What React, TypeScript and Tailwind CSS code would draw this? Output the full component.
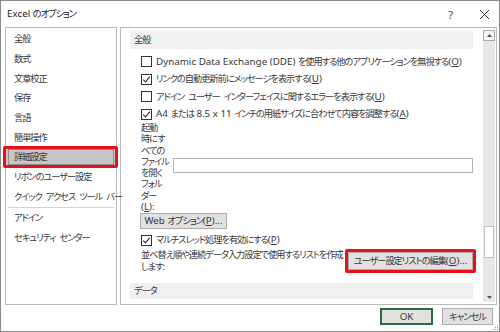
import React from "react";

const Check = ({ checked }: { checked?: boolean }) => (
  <span className="w-[11px] h-[11px] border border-[#333] bg-white flex items-center justify-center shrink-0">
    {checked && (
      <svg width="9" height="9" viewBox="0 0 9 9">
        <path d="M1.2 4.6 L3.5 6.9 L7.8 1.6" fill="none" stroke="#333" strokeWidth="1.1" />
      </svg>
    )}
  </span>
);

const L = ({ children }: { children: React.ReactNode }) => (
  <span className="tracking-normal text-[9.8px]">{children}</span>
);

const S = () => <span className="inline-block w-[4px]" />;

const U = ({ c }: { c: string }) => (
  <span className="tracking-normal text-[9.8px]">
    (<span className="underline underline-offset-[1px]">{c}</span>)
  </span>
);

const Row = ({ checked, children }: { checked?: boolean; children: React.ReactNode }) => (
  <div className="h-[17.5px] flex items-center pl-[11px] gap-[4px] whitespace-nowrap">
    <Check checked={checked} />
    <span>{children}</span>
  </div>
);

const menu: React.ReactNode[] = [
  "全般",
  "数式",
  "文章校正",
  "保存",
  "言語",
  "簡単操作",
  "詳細設定",
  "リボンのユーザー設定",
  <>
    クイック<S />アクセス<S />ツール<S />バー
  </>,
];

export default function App() {
  return (
    <div className="w-[500px] h-[332px] bg-white border border-[#8a8a8a] flex flex-col relative text-[9.2px] tracking-[-1px] text-[#383838] [font-family:'Noto_Sans','Noto_Sans_CJK_JP',sans-serif] [font-feature-settings:'palt'] leading-none">
      {/* title bar */}
      <div className="h-[26px] flex items-center pl-[6px] shrink-0">
        <span className="text-[#222]">
          <L>Excel </L>のオプション
        </span>
        <div className="ml-auto flex items-center">
          <span className="text-[11px] tracking-normal text-[#444] mr-[26px]">?</span>
          <svg width="11" height="11" viewBox="0 0 11 11" className="mr-[9px]">
            <path d="M1 1 L10 10 M10 1 L1 10" stroke="#333" strokeWidth="1" />
          </svg>
        </div>
      </div>

      {/* main */}
      <div className="h-[278px] flex pl-[4px] pr-[2px] gap-[3px] shrink-0">
        {/* left panel */}
        <div className="w-[112px] border border-[#b9b9b9] pt-[1px] flex flex-col">
          {menu.map((m, i) => (
            <div key={i} className={`h-[19.7px] flex items-center pl-[8px] whitespace-nowrap relative ${i === 6 ? "bg-[#c6c6c6]" : ""}`}>
              {i === 6 && (
                <>
                  <span className="absolute inset-[2px] border border-[#8c8c8c]" />
                  <span className="absolute -left-[3px] -right-[2px] -top-[1px] -bottom-[1px] border-[3px] border-[#e60f1a] rounded-[2px]" />
                </>
              )}
              <span className="relative">{m}</span>
            </div>
          ))}
          <div className="h-[2px] flex items-center px-[2px]">
            <div className="h-px w-full bg-[#d4d4d4]" />
          </div>
          <div className="h-[19.7px] flex items-center pl-[8px]">アドイン</div>
          <div className="h-[19.7px] flex items-center pl-[8px]">
            <span>
              セキュリティ<S />センター
            </span>
          </div>
        </div>

        {/* right panel */}
        <div className="flex-1 border border-[#b9b9b9] flex">
          <div className="flex-1 min-w-0 pl-[9px] pr-[10px] pt-[3px] flex flex-col">
            <div className="h-[18px] bg-[#f0f0f0] flex items-center pl-[4px] shrink-0">全般</div>
            <div className="mt-[4px] flex flex-col">
              <Row>
                <L>Dynamic Data Exchange (DDE) </L>を使用する他のアプリケーションを無視する<U c="O" />
              </Row>
              <Row checked>
                リンクの自動更新前にメッセージを表示する<U c="U" />
              </Row>
              <Row>
                アドイン<S />ユーザー<S />インターフェイスに関するエラーを表示する<U c="U" />
              </Row>
              <Row checked>
                <L>A4 </L>または<L> 8.5 x 11 </L>インチの用紙サイズに合わせて内容を調整する<U c="A" />
              </Row>
            </div>
            <div className="flex items-center pl-[11px] -mt-[1px]">
              <div className="w-[32px] flex flex-col leading-[11.3px] whitespace-nowrap">
                <span>起動</span>
                <span>時にす</span>
                <span>べての</span>
                <span>ファイル</span>
                <span>を開く</span>
                <span>フォル</span>
                <span>ダー</span>
                <span>
                  <U c="L" />
                  <L>:</L>
                </span>
              </div>
              <div className="flex-1 h-[15px] border border-[#b4b4b4] bg-white -mt-[3px]" />
            </div>
            <div className="pl-[10px] mt-[1px]">
              <div className="w-[87px] h-[16px] bg-[#e1e1e1] border border-[#adadad] flex items-center justify-center whitespace-nowrap">
                <span>
                  <L>Web </L>オプション<U c="P" />
                  <L>...</L>
                </span>
              </div>
            </div>
            <div className="mt-[2px]">
              <Row checked>
                マルチスレッド処理を有効にする<U c="P" />
              </Row>
            </div>
            <div className="flex items-center pl-[11px] h-[25px]">
              <div className="flex-1 flex flex-col leading-[12px] whitespace-nowrap">
                <span>並べ替え順や連続データ入力設定で使用するリストを作成</span>
                <span>
                  します<L>:</L>
                </span>
              </div>
              <div className="relative w-[125px] h-[18px] bg-[#e1e1e1] border border-[#adadad] flex items-center justify-center whitespace-nowrap">
                <span className="absolute -inset-[4px] border-[3px] border-[#e60f1a] rounded-[2px]" />
                <span className="relative">
                  ユーザー設定リストの編集<U c="O" />
                  <L>...</L>
                </span>
              </div>
            </div>
            <div className="h-[16px] bg-[#f0f0f0] flex items-center pl-[4px] mt-[9px] shrink-0">データ</div>
          </div>
          {/* scrollbar */}
          <div className="w-[12px] mr-[1px] mt-[2px] mb-[2px] bg-[#e8e8e8] flex flex-col">
            <div className="h-[11px] border border-[#a9a9a9] bg-[#f6f6f6] flex items-center justify-center shrink-0">
              <svg width="5" height="3" viewBox="0 0 5 3">
                <path d="M0 3 L2.5 0 L5 3 Z" fill="#555" />
              </svg>
            </div>
            <div className="flex-1 flex flex-col">
              <div className="h-[185px]" />
              <div className="h-[32px] bg-white border border-[#c2c2c2] mx-[1px]" />
            </div>
            <div className="h-[9px] flex items-center justify-center shrink-0">
              <svg width="5" height="3" viewBox="0 0 5 3">
                <path d="M0 0 L2.5 3 L5 0 Z" fill="#555" />
              </svg>
            </div>
          </div>
        </div>
      </div>

      {/* bottom bar */}
      <div className="flex-1 flex justify-end items-start pt-[3px] pr-[6px] gap-[9px]">
        <div className="w-[53px] h-[17px] bg-[#e1e1e1] border-2 border-[#2c6b3f] flex items-center justify-center">
          <L>OK</L>
        </div>
        <div className="w-[51px] h-[17px] bg-[#e1e1e1] border border-[#adadad] flex items-center justify-center">キャンセル</div>
      </div>
      <svg width="5" height="5" viewBox="0 0 5 5" className="absolute right-[1px] bottom-[1px]">
        <rect x="4" y="0" width="1" height="1" fill="#999" />
        <rect x="2" y="2" width="1" height="1" fill="#999" />
        <rect x="4" y="2" width="1" height="1" fill="#999" />
        <rect x="0" y="4" width="1" height="1" fill="#999" />
        <rect x="2" y="4" width="1" height="1" fill="#999" />
        <rect x="4" y="4" width="1" height="1" fill="#999" />
      </svg>
    </div>
  );
}
